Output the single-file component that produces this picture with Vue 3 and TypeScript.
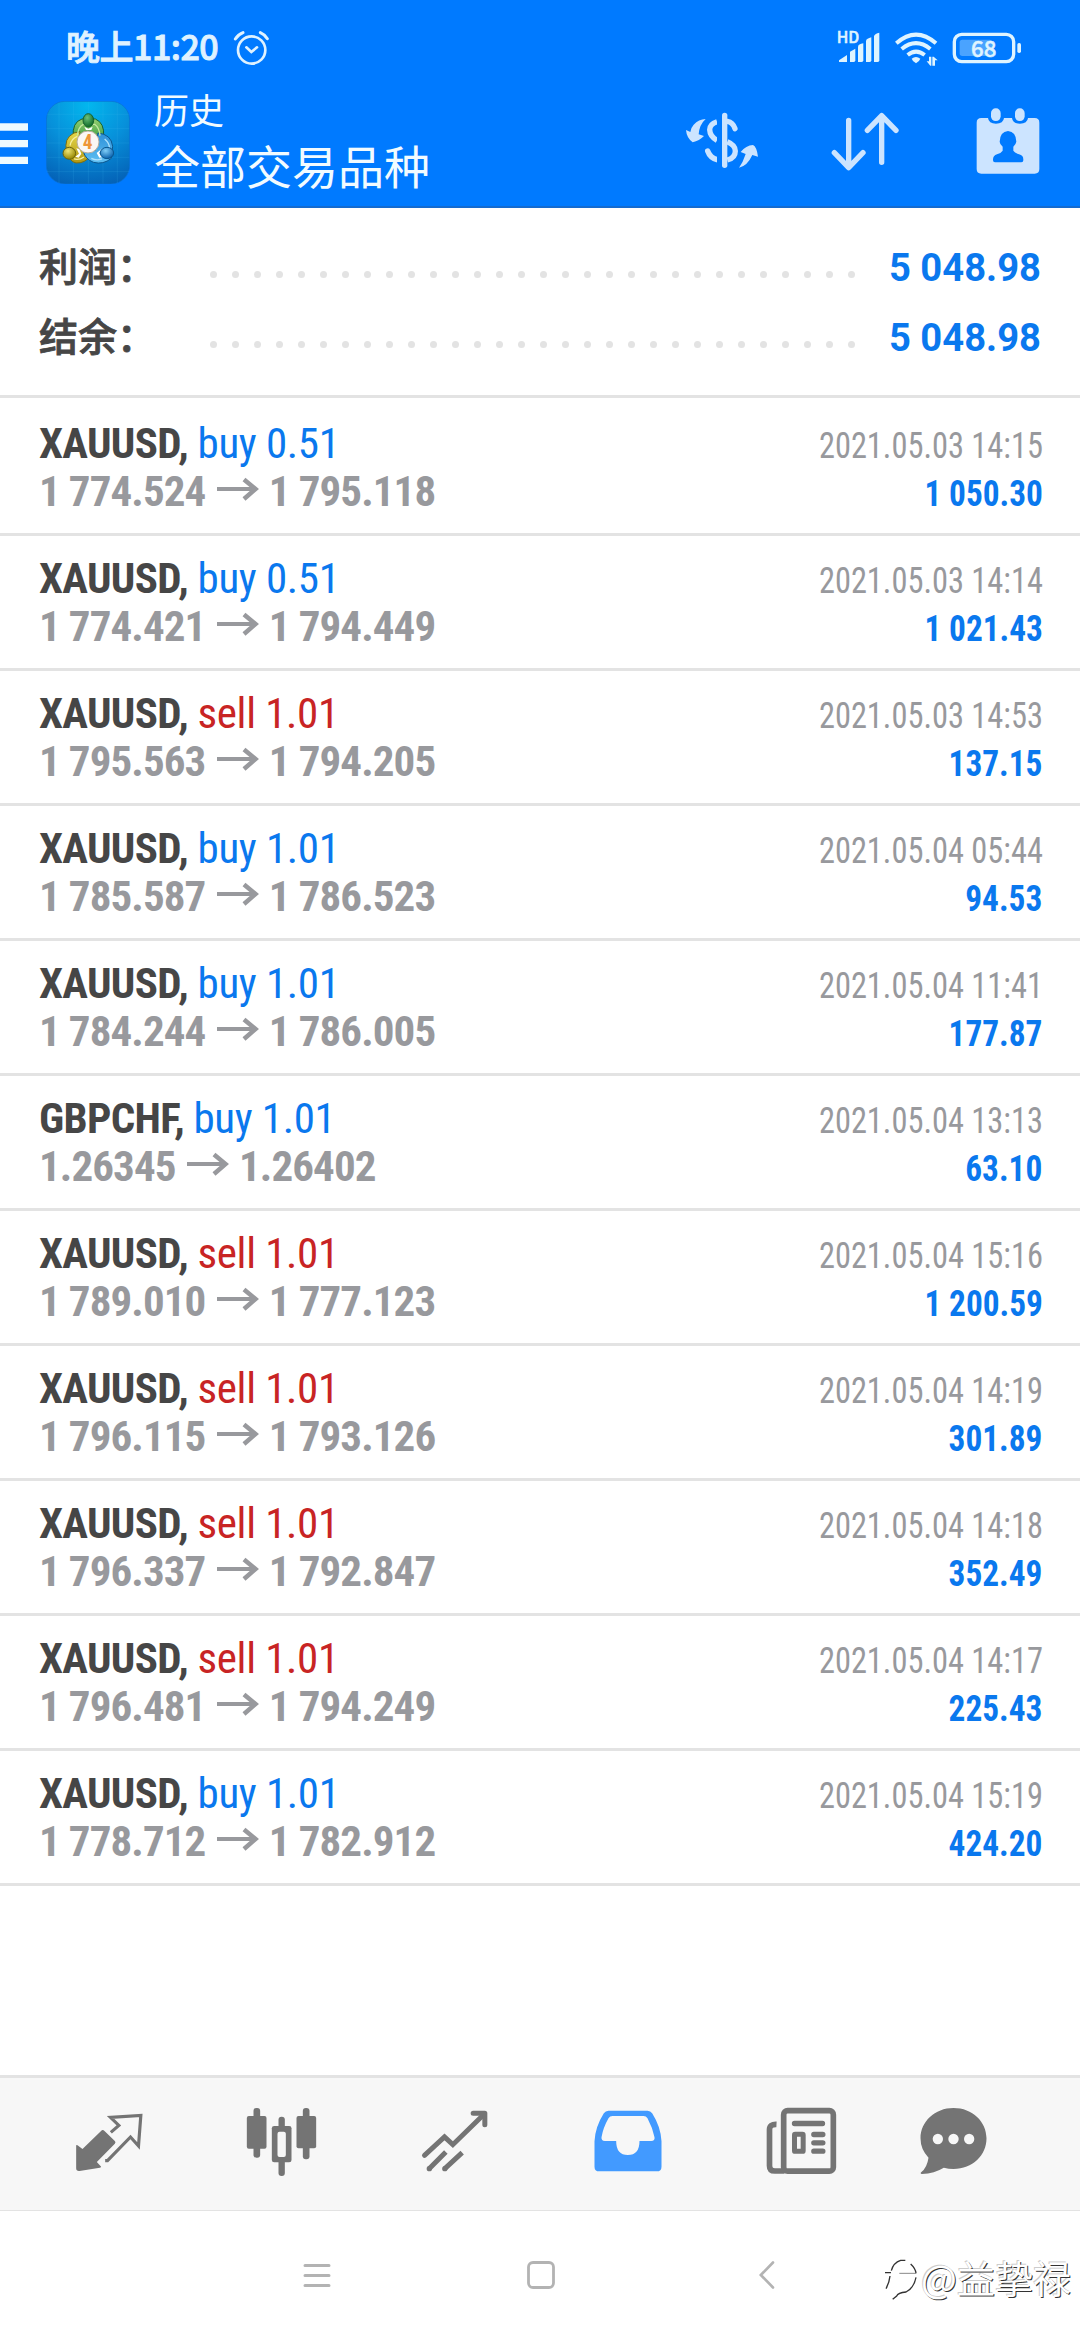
<script setup lang="ts">
interface Deal {
  symbol: string
  side: 'buy' | 'sell'
  volume: string
  open: string
  close: string
  time: string
  profit: string
}

const summary = [
  { label: '利润：', value: '5 048.98' },
  { label: '结余：', value: '5 048.98' },
]

const deals: Deal[] = [
  { symbol: 'XAUUSD', side: 'buy', volume: '0.51', open: '1 774.524', close: '1 795.118', time: '2021.05.03 14:15', profit: '1 050.30' },
  { symbol: 'XAUUSD', side: 'buy', volume: '0.51', open: '1 774.421', close: '1 794.449', time: '2021.05.03 14:14', profit: '1 021.43' },
  { symbol: 'XAUUSD', side: 'sell', volume: '1.01', open: '1 795.563', close: '1 794.205', time: '2021.05.03 14:53', profit: '137.15' },
  { symbol: 'XAUUSD', side: 'buy', volume: '1.01', open: '1 785.587', close: '1 786.523', time: '2021.05.04 05:44', profit: '94.53' },
  { symbol: 'XAUUSD', side: 'buy', volume: '1.01', open: '1 784.244', close: '1 786.005', time: '2021.05.04 11:41', profit: '177.87' },
  { symbol: 'GBPCHF', side: 'buy', volume: '1.01', open: '1.26345', close: '1.26402', time: '2021.05.04 13:13', profit: '63.10' },
  { symbol: 'XAUUSD', side: 'sell', volume: '1.01', open: '1 789.010', close: '1 777.123', time: '2021.05.04 15:16', profit: '1 200.59' },
  { symbol: 'XAUUSD', side: 'sell', volume: '1.01', open: '1 796.115', close: '1 793.126', time: '2021.05.04 14:19', profit: '301.89' },
  { symbol: 'XAUUSD', side: 'sell', volume: '1.01', open: '1 796.337', close: '1 792.847', time: '2021.05.04 14:18', profit: '352.49' },
  { symbol: 'XAUUSD', side: 'sell', volume: '1.01', open: '1 796.481', close: '1 794.249', time: '2021.05.04 14:17', profit: '225.43' },
  { symbol: 'XAUUSD', side: 'buy', volume: '1.01', open: '1 778.712', close: '1 782.912', time: '2021.05.04 15:19', profit: '424.20' },
]
</script>

<template>
  <div class="screen">
    <header class="header">
      <div class="status">
        <span class="clock">晚上11:20</span>
        <svg class="alarm" viewBox="700 0 108 270" fill="none" stroke="#dff2ff" stroke-width="8" stroke-linecap="round">
          <circle cx="756" cy="150" r="41" />
          <path d="M740 142L755 156L772 142" />
          <path d="M707 117Q715 104 730 98M782 98Q796 104 803 116" stroke-width="9" />
        </svg>
        <svg class="signals" viewBox="528 0 555 270" fill="#dff4ff">
          <text x="527" y="129" font-size="47" font-weight="500" class="hd">HD</text>
          <path d="M534 186V181L558 165V186Z" />
          <path d="M567 186V155L583 146V181Q583 186 578 186Z" />
          <path d="M591 186V140Q592 132 607 130V181Q607 186 602 186Z" />
          <path d="M615 186V122Q617 116 631 112V181Q631 186 626 186Z" />
          <path d="M639 186V108Q642 100 655 98V181Q655 186 650 186Z" />
          <g fill="none" stroke="#dff4ff" stroke-width="12">
            <path d="M706 130Q765 78 825 130" />
            <path d="M722 147Q765 112 808 147" />
            <path d="M740 165Q765 145 791 165" />
          </g>
          <path d="M752 176Q765 166 778 176Q776 183 765 190Q754 183 752 176Z" />
          <path d="M797 184H804V170H811V197H808ZM814 170H818L830 181H822V197H814Z" />
          <rect x="880" y="103" width="178" height="82" rx="22" fill="none" stroke="#dff4ff" stroke-width="10" />
          <rect x="896" y="119" width="98" height="49" rx="8" fill="#4aa3ff" />
          <rect x="1069" y="129" width="11" height="30" rx="5" />
          <text x="968" y="170" font-size="67" font-weight="500" text-anchor="middle" class="hd">68</text>
        </svg>
      </div>
      <div class="toolbar">
        <svg class="burger" viewBox="0 270 84 348" fill="#eefaff">
          <path d="M0 370H84V392H0ZM0 420H84V442H0ZM0 470H84V492H0Z" />
        </svg>
        <svg class="logo" viewBox="48 32 252 250">
          <defs>
            <radialGradient id="sky" cx=".5" cy=".05" r="1"><stop offset="0" stop-color="#02b7ee" /><stop offset=".5" stop-color="#0790da" /><stop offset="1" stop-color="#0461b6" /></radialGradient>
            <linearGradient id="green" x1="0" y1="0" x2="0" y2="1"><stop offset="0" stop-color="#94cf70" /><stop offset="1" stop-color="#1f8c34" /></linearGradient>
            <linearGradient id="gold" x1="0" y1="0" x2="0" y2="1"><stop offset="0" stop-color="#e6d94c" /><stop offset="1" stop-color="#b29812" /></linearGradient>
            <linearGradient id="azure" x1="0" y1="0" x2="0" y2="1"><stop offset="0" stop-color="#2c8fd8" /><stop offset="1" stop-color="#5fc0f3" /></linearGradient>
            <radialGradient id="headG" cx=".4" cy=".3" r=".7"><stop offset="0" stop-color="#6cc07a" /><stop offset="1" stop-color="#0c6a28" /></radialGradient>
            <radialGradient id="headY" cx=".4" cy=".3" r=".7"><stop offset="0" stop-color="#efe574" /><stop offset="1" stop-color="#958500" /></radialGradient>
            <radialGradient id="headB" cx=".4" cy=".3" r=".7"><stop offset="0" stop-color="#7fcdf7" /><stop offset="1" stop-color="#0a62ae" /></radialGradient>
          </defs>
          <rect x="49" y="33" width="250" height="248" rx="56" fill="url(#sky)" stroke="#0a6fd2" stroke-width="2" />
          <path d="M87 36V278M130 34V280M175 34V280M219 34V280M262 36V278M50 72H298M50 115H298M50 158H298M50 201H298M50 244H298" stroke="#4cc4f2" stroke-opacity=".22" stroke-width="2" fill="none" />
          <g stroke-width="3">
            <path d="M130 142Q125 96 156 86H196Q224 98 221 138L206 166L176 122Z" fill="url(#green)" stroke="#17602c" />
            <path d="M110 184Q100 144 132 128L150 124L144 160L182 196Q164 220 138 218Q118 214 110 184Z" fill="url(#gold)" stroke="#796c12" />
            <path d="M204 128Q244 132 248 168L244 204Q220 224 190 216Q166 206 160 184L196 180Z" fill="url(#azure)" stroke="#0b568f" />
            <path d="M142 136Q144 110 160 102H194Q208 112 210 136" fill="none" stroke="#c4e8a0" stroke-width="4" />
            <path d="M120 166Q124 144 142 138M132 206Q148 210 162 200" fill="none" stroke="#f6efa0" stroke-width="4" />
            <path d="M224 146Q240 160 238 174M184 204Q200 212 216 206" fill="none" stroke="#aee0fb" stroke-width="4" />
            <path d="M163 109L175 115L188 109L184 119H168ZM139 174L147 190L136 199L146 202L154 190L148 176ZM219 172L207 188L218 200L208 202L200 188Z" fill="#fff" stroke="none" />
            <ellipse cx="175" cy="90" rx="16" ry="20" fill="url(#headG)" stroke="#17602c" />
            <ellipse cx="118" cy="189" rx="19" ry="18" fill="url(#headY)" stroke="#6b6410" />
            <ellipse cx="231" cy="188" rx="20" ry="17" fill="url(#headB)" stroke="#0b568f" />
          </g>
          <circle cx="174" cy="155" r="33" fill="#fbf7f4" stroke="#b9ad9e" stroke-width="3" />
          <text x="173" y="176" text-anchor="middle" class="four">4</text>
        </svg>
        <div class="titles">
          <div class="title">历史</div>
          <div class="subtitle">全部交易品种</div>
        </div>
        <svg class="act-money" viewBox="78 270 216 348" fill="#cce4ff">
          <path d="M137 357Q116 358 101 374Q92 384 91 396L78 390Q80 414 98 427Q118 422 132 408L116 403Q118 374 137 357Z" />
          <path d="M237 503Q249 487 257 462L242 456Q258 436 279 435Q290 440 294 470L277 465Q262 498 237 503Z" />
          <g fill="none" stroke="#cce4ff" stroke-linecap="round" stroke-width="16">
            <path d="M194 346V496" />
            <path d="M171 365Q149 372 149 389Q150 410 171 421" stroke-linecap="butt" />
            <path d="M202 364Q219 367 225 386" />
            <path d="M202 425Q226 435 226 453Q226 474 202 480" stroke-linecap="butt" />
            <path d="M143 453Q150 473 171 479" />
          </g>
          <path d="M171 340H186V505H171Z" fill="#007aff" />
        </svg>
        <svg class="act-sort" viewBox="513 270 204 348" fill="none" stroke="#cce4ff" stroke-width="16" stroke-linecap="round" stroke-linejoin="round">
          <path d="M566 361V502M523 458L566 503L609 458M665 487V347M622 391L665 347L708 391" />
        </svg>
        <svg class="act-date" viewBox="948 270 192 348" fill="#cce4ff">
          <path d="M964 354H984Q986 371 1008 371Q1030 371 1032 354H1056Q1058 371 1080 371Q1102 371 1104 354H1124Q1138 354 1138 368V507Q1138 521 1124 521H964Q950 521 950 507V368Q950 354 964 354Z" />
          <rect x="993" y="325" width="29" height="38" rx="14" />
          <rect x="1065" y="325" width="29" height="38" rx="14" />
          <path fill="#007aff" d="M1044 393Q1068 395 1069 425Q1068 432 1060 440V452Q1064 459 1077 463Q1091 466 1090 481Q1090 487 1084 487H1005Q999 487 999 481Q998 467 1011 463Q1024 459 1028 452V440Q1019 432 1019 425Q1020 395 1044 393Z" />
        </svg>
      </div>
    </header>

    <section class="summary">
      <div v-for="row in summary" :key="row.label" class="sum-row">
        <span class="sum-label">{{ row.label }}</span>
        <span class="dots"><i v-for="n in 30" :key="n" /></span>
        <span class="sum-value">{{ row.value }}</span>
      </div>
    </section>

    <ul class="deals">
      <li v-for="(d, i) in deals" :key="i" class="deal">
        <div class="line">
          <span class="sym">{{ d.symbol }},</span>
          <span class="side" :class="d.side">{{ d.side }} {{ d.volume }}</span>
          <span class="time">{{ d.time }}</span>
        </div>
        <div class="line">
          <span class="price">{{ d.open }}</span>
          <svg class="arrow" viewBox="0 0 42 30" fill="none" stroke="#98999d" stroke-width="4">
            <path d="M0 13H38" /><path d="M27 3.5L38.5 13L27 23" stroke-width="4.5" />
          </svg>
          <span class="price">{{ d.close }}</span>
          <span class="profit">{{ d.profit }}</span>
        </div>
      </li>
    </ul>
    <div class="filler" />

    <nav class="tabs">
      <svg viewBox="145.5 54 360 396">
        <path d="M304 211Q308 209 312 213L343 243Q347 247 343 251L289 306L302 320Q302 322 298 323L237 333Q227 334 227 325V257Q227 253 231 256L246 267Z" fill="#747474" />
        <path d="M331 217L355 196L330 172L421 166L414 258L390 231L321 302H314" fill="none" stroke="#747474" stroke-width="9.5" />
      </svg>
      <svg viewBox="664.5 54 360 396" fill="#747474">
        <rect x="759" y="144" width="20" height="149" rx="9" /><rect x="739" y="168" width="59" height="98" rx="6" />
        <rect x="907" y="144" width="20" height="154" rx="9" /><rect x="888" y="168" width="59" height="97" rx="6" />
        <rect x="834" y="170" width="19" height="178" rx="9" /><rect x="814" y="198" width="59" height="109" rx="7" />
        <rect x="831" y="215" width="25" height="76" rx="6" fill="#f7f7f7" />
      </svg>
      <svg viewBox="103.5 54 360 396" fill="none" stroke="#747474" stroke-width="15" stroke-linejoin="miter">
        <path d="M192 286L252 231L277 254L369 164" stroke-linecap="round" />
        <path d="M338 160H373V194" stroke-linecap="round" stroke-linejoin="round" />
        <path d="M256 276L206 326M305 278L253 326" />
        <g fill="#747474" stroke="none"><circle cx="206.500" cy="326" r="8" /><circle cx="253" cy="326" r="8" /></g>
      </svg>
      <svg viewBox="622.5 54 360 396">
        <path fill="#429aff" fill-rule="evenodd" d="M744 152H861Q870 152 875 160Q901 201 903 244V320Q903 334 889 334H716Q702 334 702 320V244Q704 201 730 160Q735 152 744 152ZM756 168Q748 168 744 175Q728 203 723 232Q722 243 733 243H767Q767 285 802 285Q837 285 837 243H872Q884 243 882 232Q876 203 861 175Q857 168 849 168Z" />
      </svg>
      <svg viewBox="61.5 54 360 396" fill="none" stroke="#747474" stroke-width="17">
        <rect x="189.500" y="152" width="149" height="181.500" rx="12" />
        <path d="M168 193Q147 192 147 209V317Q147 333 163 333H192" />
        <path d="M222 190.500H306M280 223.500H307M280 248.500H307M280 273.500H307" stroke-linecap="round" stroke-width="16" />
        <rect x="222" y="223" width="26" height="51" rx="2" stroke-width="15" />
      </svg>
      <svg class="last" viewBox="517.5 54 360 396">
        <path fill="#747474" d="M699 144C756 144 798 185 798 235C798 286 756 327 699 327Q684 327 670 323Q642 340 604 342Q598 341 602 337Q620 322 624 293Q600 268 600 235C600 185 643 144 699 144Z" />
        <g fill="#f7f7f7"><circle cx="652" cy="237" r="15.500" /><circle cx="699" cy="237" r="15.500" /><circle cx="746" cy="237" r="15.500" /></g>
      </svg>
    </nav>

    <div class="sysnav">
      <svg width="28" height="30" viewBox="0 0 28 30" fill="none" stroke="#b3b3b3" stroke-width="3" stroke-linecap="round"><path d="M2 5.500H26M2 15.500H26M2 25.500H26" /></svg>
      <svg class="home" width="28" height="30" viewBox="0 0 28 30" fill="none" stroke="#b3b3b3" stroke-width="2.800"><rect x="1.500" y="2.500" width="25" height="25" rx="4.500" /></svg>
      <svg class="back" width="16" height="30" viewBox="0 0 16 30" fill="none" stroke="#b3b3b3" stroke-width="2.600" stroke-linecap="round"><path d="M14 2.500L1.800 15L14 27.500" /></svg>
      <div class="mark">
        <svg width="36" height="44" viewBox="42 66 108 132" fill="none" stroke-width="4">
          <path stroke="#333" d="M45 110H63M64 104Q70 80 92 73H106M60 120Q58 140 48 158M122 84Q137 98 138 112M138 124Q132 156 108 168Q84 170 80 180L68 190" />
          <path stroke="#888" stroke-width="3" d="M88 112H138" />
        </svg>
        <span>@益挚禄</span>
      </div>
    </div>
  </div>
</template>

<style>
body {
  background: #fff;
}
</style>

<style scoped>
.screen {
  width: 1080px;
  height: 2340px;
  display: flex;
  flex-direction: column;
  background: #fff;
  overflow: hidden;
  font-family: "Roboto", "Noto Sans CJK SC", sans-serif;
}
.screen svg {
  display: block;
  flex: none;
}
.header {
  box-sizing: border-box;
  height: 208px;
  background: #007aff;
  border-bottom: 2px solid #146bd0;
}
.status {
  height: 90px;
  display: flex;
  padding: 0 58px 0 66px;
}
.clock {
  width: 167px;
  font: 500 34px/92px "Noto Sans CJK SC", sans-serif;
  letter-spacing: -0.5px;
  -webkit-text-stroke: 0.9px #dff2ff;
  color: #dff2ff;
  white-space: nowrap;
}
.alarm {
  width: 36px;
  height: 90px;
}
.signals {
  width: 185px;
  height: 90px;
  margin-left: auto;
}
.hd {
  font-family: "Noto Sans CJK SC", sans-serif;
  stroke: #dff4ff;
  stroke-width: 1.5px;
}
.toolbar {
  height: 116px;
  display: flex;
  padding-right: 40px;
}
.burger {
  width: 28px;
  height: 116px;
}
.logo {
  width: 84px;
  height: 83.300px;
  margin: 10.700px 0 0 18px;
}
.four {
  font: 700 58px "Roboto Condensed", sans-serif;
  fill: #ee9638;
}
.titles {
  margin-left: 24px;
  color: #f2fbff;
  font-family: "Noto Sans CJK SC", sans-serif;
  white-space: nowrap;
}
.title {
  font-size: 35px;
  line-height: 38px;
}
.subtitle {
  font-size: 46px;
  line-height: 72px;
}
.act-money {
  width: 72px;
  height: 116px;
  margin-left: auto;
}
.act-sort {
  width: 68px;
  height: 116px;
  margin-left: 73px;
}
.act-date {
  width: 64px;
  height: 116px;
  margin-left: 77px;
}
.summary {
  height: 166px;
  padding: 21px 39px 0;
  border-bottom: 3px solid #e3e3e3;
}
.sum-row {
  height: 70px;
  display: flex;
  align-items: center;
}
.sum-label {
  width: 171px;
  font: 500 39px/70px "Noto Sans CJK SC", sans-serif;
  color: #464646;
  -webkit-text-stroke: 0.8px #464646;
}
.dots {
  width: 645px;
  display: flex;
  justify-content: space-between;
  padding-top: 21px;
}
.dots i {
  width: 7px;
  height: 7px;
  border-radius: 50%;
  background: #e3e3e3;
}
.sum-value {
  margin-left: auto;
  padding-top: 8px;
  font-size: 38.200px;
  font-weight: 700;
  color: #0a78ee;
}
.deals {
  list-style: none;
  margin: 0;
  padding: 3px 0 0;
}
.deal {
  box-sizing: border-box;
  height: 135px;
  padding: 18px 37.500px 0 39px;
  border-bottom: 3px solid #e3e3e3;
  font-family: "Roboto Condensed", "Roboto", sans-serif;
}
.line {
  height: 48px;
  display: flex;
  align-items: baseline;
  font-size: 43px;
  line-height: 48px;
  white-space: nowrap;
}
.sym {
  font-weight: 700;
  letter-spacing: -0.700px;
  color: #464646;
}
.side {
  margin-left: 9.500px;
  letter-spacing: -0.350px;
}
.buy {
  color: #0a78ee;
}
.sell {
  color: #c82424;
}
.price {
  font-weight: 700;
  letter-spacing: -0.900px;
  color: #98999d;
}
.arrow {
  width: 42px;
  height: 30px;
  margin: 0 9.700px 0 11.700px;
}
.time,
.profit {
  margin-left: auto;
  font-size: 36px;
  transform-origin: 100% 50%;
}
.time {
  color: #98999d;
  transform: scaleX(0.9);
}
.profit {
  font-weight: 700;
  color: #0a78ee;
  transform: scaleX(0.925);
}
.filler {
  flex: 1;
}
.tabs {
  height: 132px;
  flex: none;
  display: flex;
  gap: 53px;
  padding-left: 48.500px;
  background: #f7f7f7;
  border-top: 3px solid #e3e3e3;
  border-bottom: 1px solid #e3e3e3;
}
.tabs svg {
  width: 120px;
  height: 132px;
}
.tabs .last {
  margin-left: -21px;
}
.sysnav {
  position: relative;
  height: 129px;
  flex: none;
  display: flex;
  padding: 49px 0 0 303px;
  box-sizing: border-box;
}
.home {
  margin-left: 196px;
}
.back {
  margin-left: 204px;
}
.mark {
  position: absolute;
  right: 9px;
  top: 41px;
  display: flex;
  align-items: center;
  gap: 1px;
  font: 400 38px/46px "Noto Sans CJK SC", sans-serif;
  color: #fff;
  text-shadow: 1px 1px 0 #333, -1px -1px 0 #ccc;
}
.mark svg {
  margin-top: 6px;
}
</style>
